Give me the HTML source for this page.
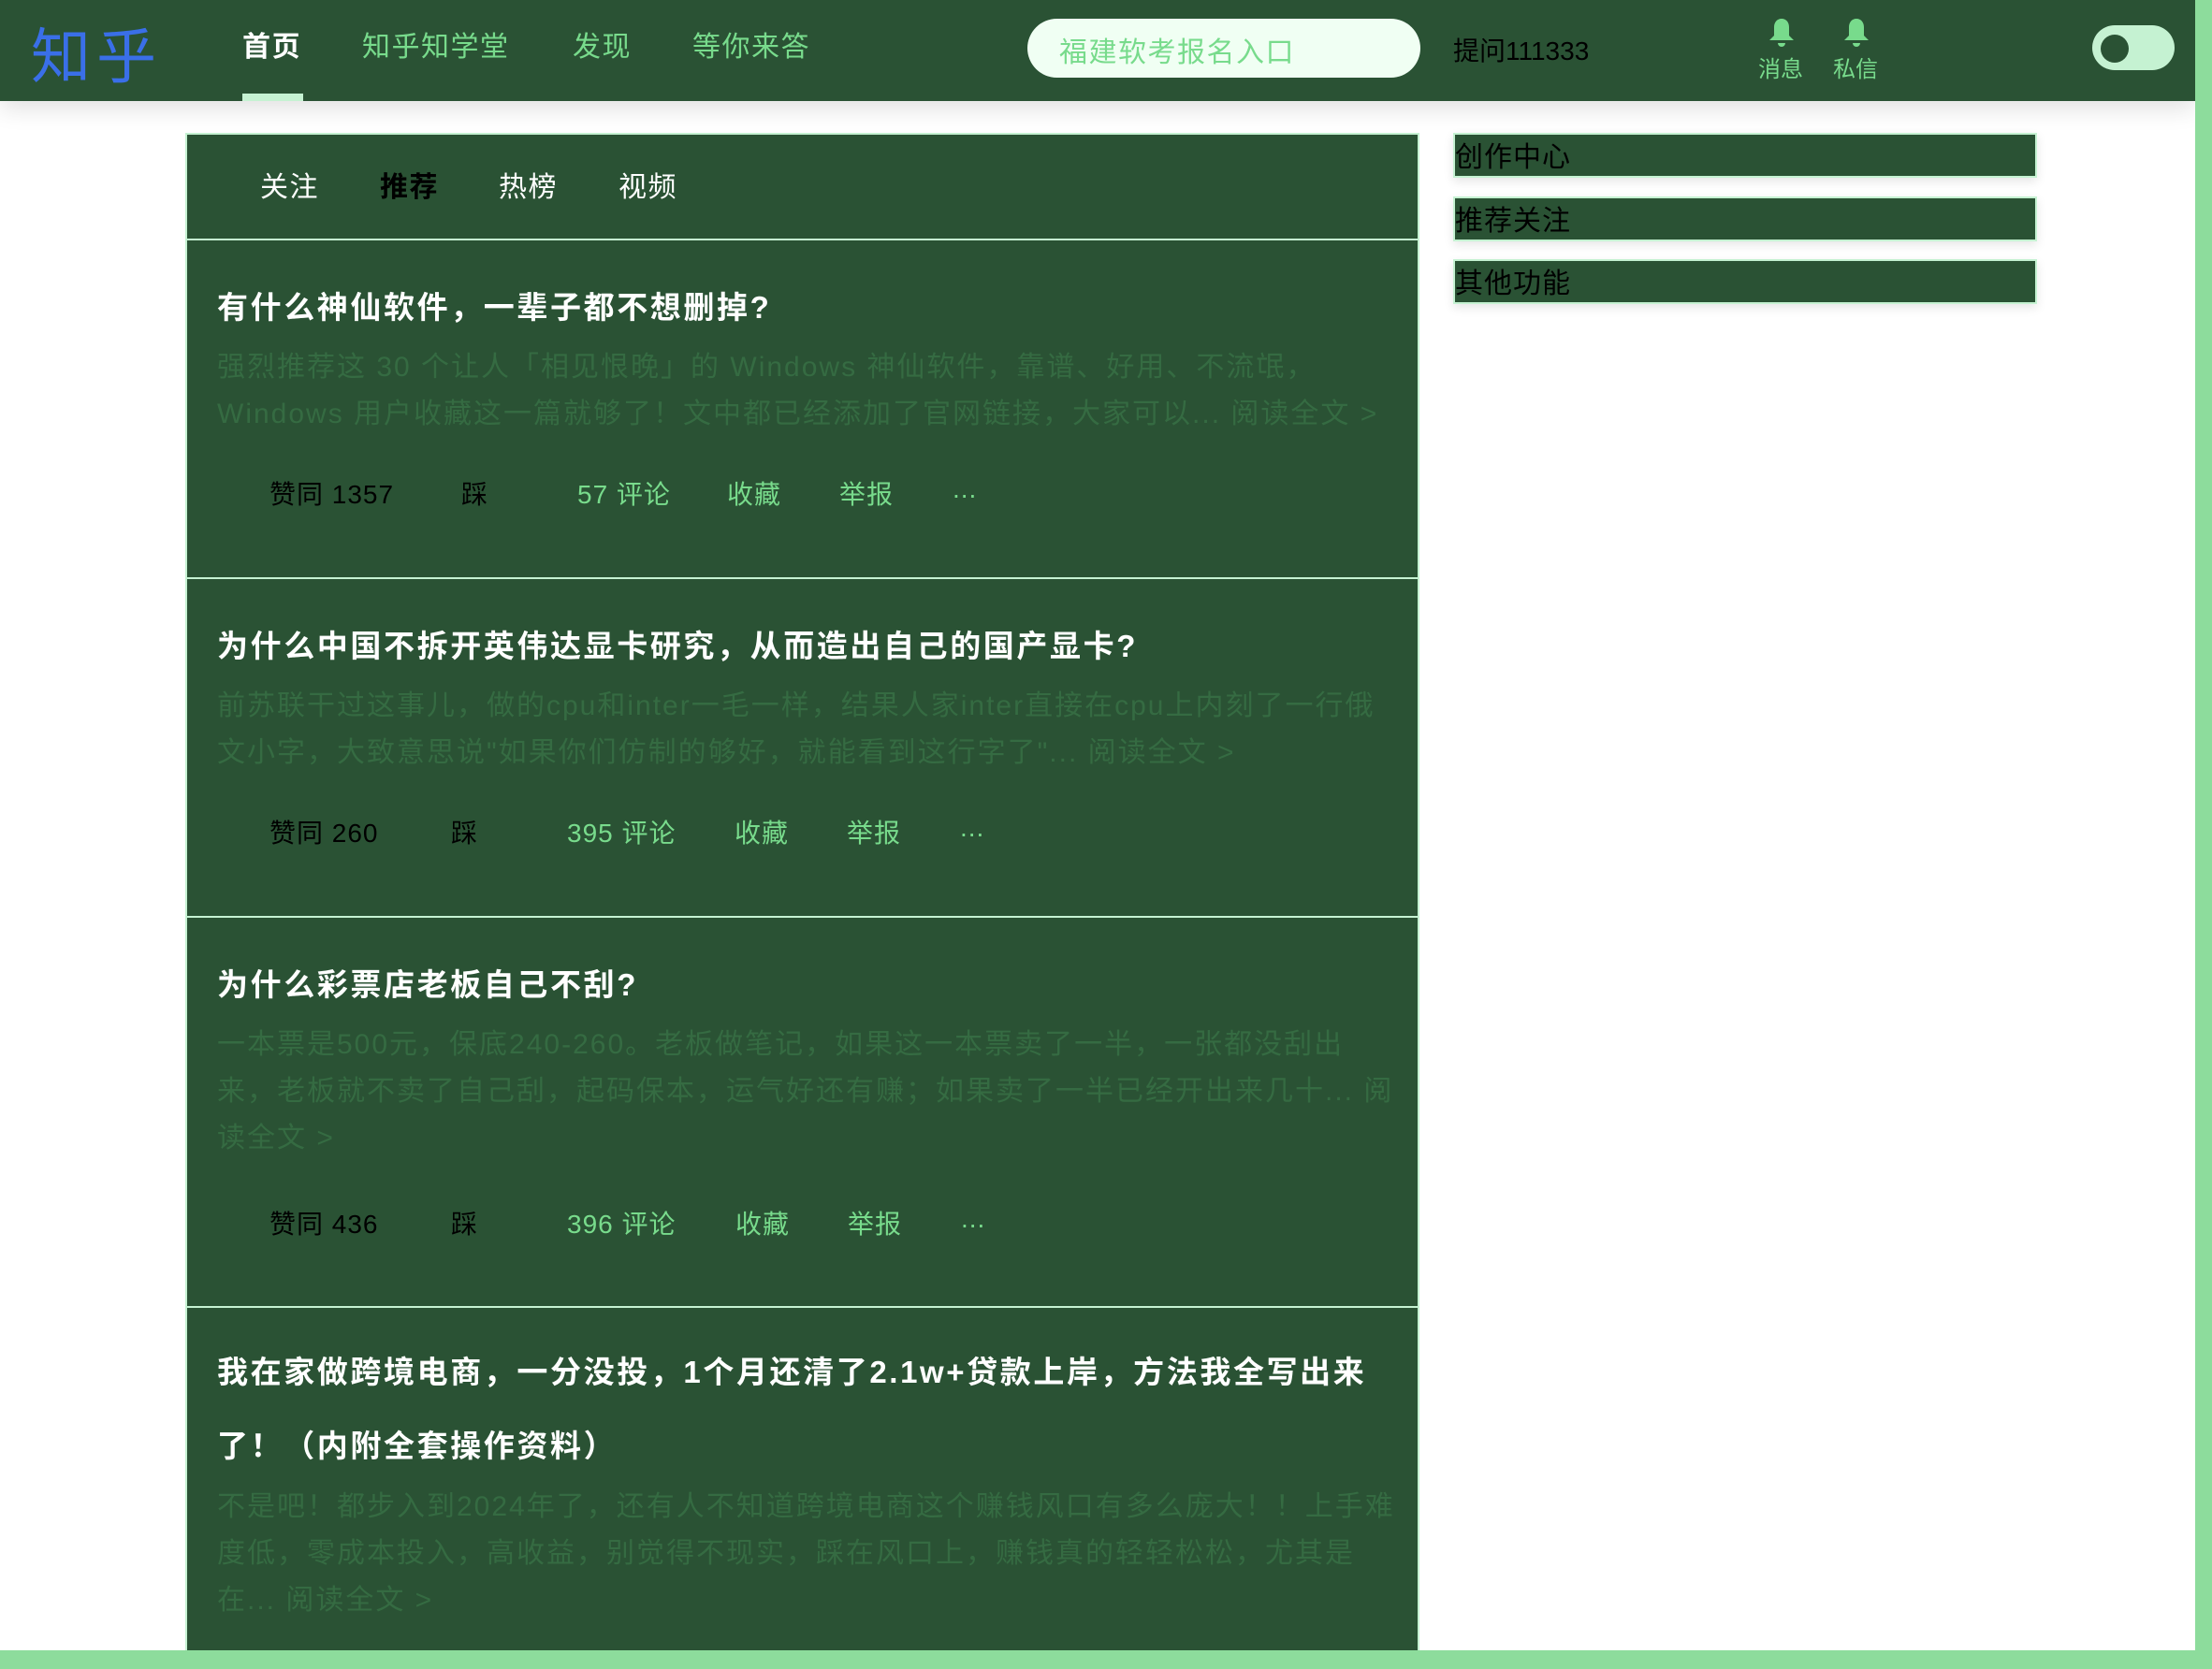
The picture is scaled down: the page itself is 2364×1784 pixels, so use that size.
<!DOCTYPE html>
<html><head><meta charset="utf-8"><style>
*{margin:0;padding:0;box-sizing:border-box}
body{width:2364px;height:1784px;position:relative;background:#8ddc9c;font-family:"Liberation Sans","Noto Sans CJK SC",sans-serif;overflow:hidden}
.page{position:absolute;left:0;top:0;width:2346px;height:1764px;background:#fff;overflow:hidden}
.a{position:absolute;white-space:nowrap}
.hdr{position:absolute;left:0;top:0;width:2346px;height:108px;background:#2a5234;box-shadow:0 8px 24px rgba(0,0,0,.12)}
.nav{font-size:30px;color:#78db8c;top:25px;letter-spacing:1.5px}
.card{position:absolute;left:198px;top:142px;width:1319px;height:1640px;background:#2a5234;border:2px solid #c5f2d2;border-bottom:none}
.sep{position:absolute;left:0;width:100%;height:2px;background:#c5f2d2}
.title{font-size:33px;font-weight:bold;color:#fff;left:32px;letter-spacing:2.6px}
.ex{font-size:30px;color:#356b42;left:32px;line-height:50px;white-space:normal;width:1262px;letter-spacing:2px}
.act{font-size:28px;color:#78db8c;letter-spacing:1px}
.tab{font-size:30px;color:#fff;top:31px;letter-spacing:1.5px}
.side{position:absolute;left:1553px;width:624px;height:48px;background:#2a5234;border:2px solid #c5f2d2;box-shadow:0 4px 10px rgba(0,0,0,.1);font-size:30px;line-height:50px;color:#000;letter-spacing:1px}
</style></head><body>
<div class="page">
<div class="hdr">
<div class="a" style="left:33px;top:10px;font-size:64px;color:#3a6fe8;letter-spacing:6px">知乎</div>
<div class="a nav" style="left:259px;color:#fff;font-weight:bold">首页</div>
<div style="position:absolute;left:259px;top:100px;width:65px;height:8px;background:#c5f2d2"></div>
<div class="a nav" style="left:387px">知乎知学堂</div>
<div class="a nav" style="left:612px">发现</div>
<div class="a nav" style="left:740px">等你来答</div>
<div style="position:absolute;left:1098px;top:20px;width:420px;height:63px;border-radius:32px;background:#f0fff3"></div>
<div class="a" style="left:1132px;top:31px;font-size:30px;color:#78db8c;letter-spacing:1.5px">福建软考报名入口</div>
<div class="a" style="left:1553px;top:33px;font-size:28px;color:#000">提问111333</div>
<svg class="a" style="left:1889px;top:18px" width="30" height="36" viewBox="0 0 30 36"><path d="M15 2c-5 0-8 4-8 9v9l-5 5h26l-5-5v-9c0-5-3-9-8-9z M11 28a4 4 0 0 0 8 0z" fill="#78db8c"/></svg>
<svg class="a" style="left:1969px;top:18px" width="30" height="36" viewBox="0 0 30 36"><path d="M15 2c-5 0-8 4-8 9v9l-5 5h26l-5-5v-9c0-5-3-9-8-9z M11 28a4 4 0 0 0 8 0z" fill="#78db8c"/></svg>
<div class="a" style="left:1879px;top:54px;font-size:24px;color:#78db8c">消息</div>
<div class="a" style="left:1959px;top:54px;font-size:24px;color:#78db8c">私信</div>
<div style="position:absolute;left:2236px;top:27px;width:88px;height:48px;border-radius:24px;background:#c5f2d2"></div>
<div style="position:absolute;left:2245px;top:37px;width:30px;height:30px;border-radius:50%;background:#2a5234"></div>
</div>

<div class="card">
<div class="a tab" style="left:78px">关注</div>
<div class="a tab" style="left:206px;color:#000;font-weight:bold">推荐</div>
<div class="a tab" style="left:333px">热榜</div>
<div class="a tab" style="left:461px">视频</div>
<div class="sep" style="top:111px"></div>

<div class="a title" style="top:158px">有什么神仙软件，一辈子都不想删掉?</div>
<div class="a ex" style="top:224px">强烈推荐这 30 个让人「相见恨晚」的 Windows 神仙软件，靠谱、好用、不流氓，Windows 用户收藏这一篇就够了！文中都已经添加了官网链接，大家可以... 阅读全文 &gt;</div>
<div class="a act" style="left:88px;top:363px;color:#000">赞同 1357</div>
<div class="a act" style="left:293px;top:363px;color:#000">踩</div>
<div class="a act" style="left:417px;top:363px">57 评论</div>
<div class="a act" style="left:577px;top:363px">收藏</div>
<div class="a act" style="left:697px;top:363px">举报</div>
<div class="a act" style="left:818px;top:363px">...</div>
<div class="sep" style="top:473px"></div>

<div class="a title" style="top:520px">为什么中国不拆开英伟达显卡研究，从而造出自己的国产显卡?</div>
<div class="a ex" style="top:586px">前苏联干过这事儿，做的cpu和inter一毛一样，结果人家inter直接在cpu上内刻了一行俄文小字，大致意思说"如果你们仿制的够好，就能看到这行字了"... 阅读全文 &gt;</div>
<div class="a act" style="left:88px;top:725px;color:#000">赞同 260</div>
<div class="a act" style="left:282px;top:725px;color:#000">踩</div>
<div class="a act" style="left:406px;top:725px">395 评论</div>
<div class="a act" style="left:585px;top:725px">收藏</div>
<div class="a act" style="left:705px;top:725px">举报</div>
<div class="a act" style="left:826px;top:725px">...</div>
<div class="sep" style="top:835px"></div>

<div class="a title" style="top:882px">为什么彩票店老板自己不刮?</div>
<div class="a ex" style="top:948px">一本票是500元，保底240-260。老板做笔记，如果这一本票卖了一半，一张都没刮出来，老板就不卖了自己刮，起码保本，运气好还有赚；如果卖了一半已经开出来几十... 阅读全文 &gt;</div>
<div class="a act" style="left:88px;top:1143px;color:#000">赞同 436</div>
<div class="a act" style="left:282px;top:1143px;color:#000">踩</div>
<div class="a act" style="left:406px;top:1143px">396 评论</div>
<div class="a act" style="left:586px;top:1143px">收藏</div>
<div class="a act" style="left:706px;top:1143px">举报</div>
<div class="a act" style="left:827px;top:1143px">...</div>
<div class="sep" style="top:1252px"></div>

<div class="a title" style="top:1283px;white-space:normal;width:1262px;line-height:79px">我在家做跨境电商，一分没投，1个月还清了2.1w+贷款上岸，方法我全写出来了！（内附全套操作资料）</div>
<div class="a ex" style="top:1442px">不是吧！都步入到2024年了，还有人不知道跨境电商这个赚钱风口有多么庞大！！上手难度低，零成本投入，高收益，别觉得不现实，踩在风口上，赚钱真的轻轻松松，尤其是在... 阅读全文 &gt;</div>
</div>

<div class="side" style="top:142px">创作中心</div>
<div class="side" style="top:210px">推荐关注</div>
<div class="side" style="top:277px">其他功能</div>
</div>
</body></html>
